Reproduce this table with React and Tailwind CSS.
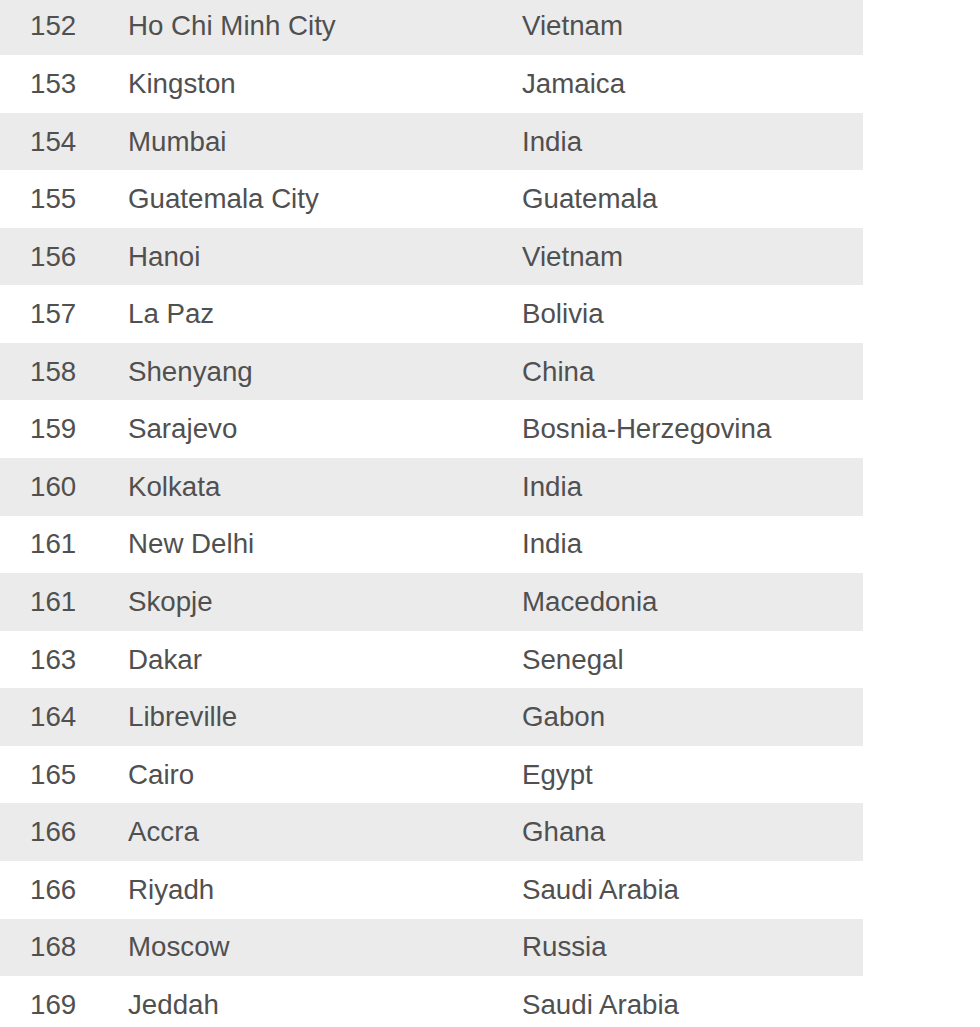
import React from 'react';

const rows = [
  ['152', 'Ho Chi Minh City', 'Vietnam'],
  ['153', 'Kingston', 'Jamaica'],
  ['154', 'Mumbai', 'India'],
  ['155', 'Guatemala City', 'Guatemala'],
  ['156', 'Hanoi', 'Vietnam'],
  ['157', 'La Paz', 'Bolivia'],
  ['158', 'Shenyang', 'China'],
  ['159', 'Sarajevo', 'Bosnia-Herzegovina'],
  ['160', 'Kolkata', 'India'],
  ['161', 'New Delhi', 'India'],
  ['161', 'Skopje', 'Macedonia'],
  ['163', 'Dakar', 'Senegal'],
  ['164', 'Libreville', 'Gabon'],
  ['165', 'Cairo', 'Egypt'],
  ['166', 'Accra', 'Ghana'],
  ['166', 'Riyadh', 'Saudi Arabia'],
  ['168', 'Moscow', 'Russia'],
  ['169', 'Jeddah', 'Saudi Arabia'],
];

const App = () => {
  return (
    <div className="w-[980px] h-[1027px] overflow-hidden bg-white">
      <table
        className="-mt-[2.5px] w-[863px] border-collapse text-[27.7px] text-[#505050]"
        style={{ fontFamily: '"Liberation Sans", Arial, sans-serif' }}
      >
        <tbody>
          {rows.map(([rank, city, country], i) => (
            <tr key={i} className={`h-[57.57px] ${i % 2 === 0 ? 'bg-[#ebebeb]' : 'bg-white'}`}>
              <td className="w-[128px] pl-[30px] p-0 align-middle leading-none">{rank}</td>
              <td className="w-[394px] p-0 align-middle leading-none">{city}</td>
              <td className="p-0 align-middle leading-none">{country}</td>
            </tr>
          ))}
        </tbody>
      </table>
    </div>
  );
};

export default App;
